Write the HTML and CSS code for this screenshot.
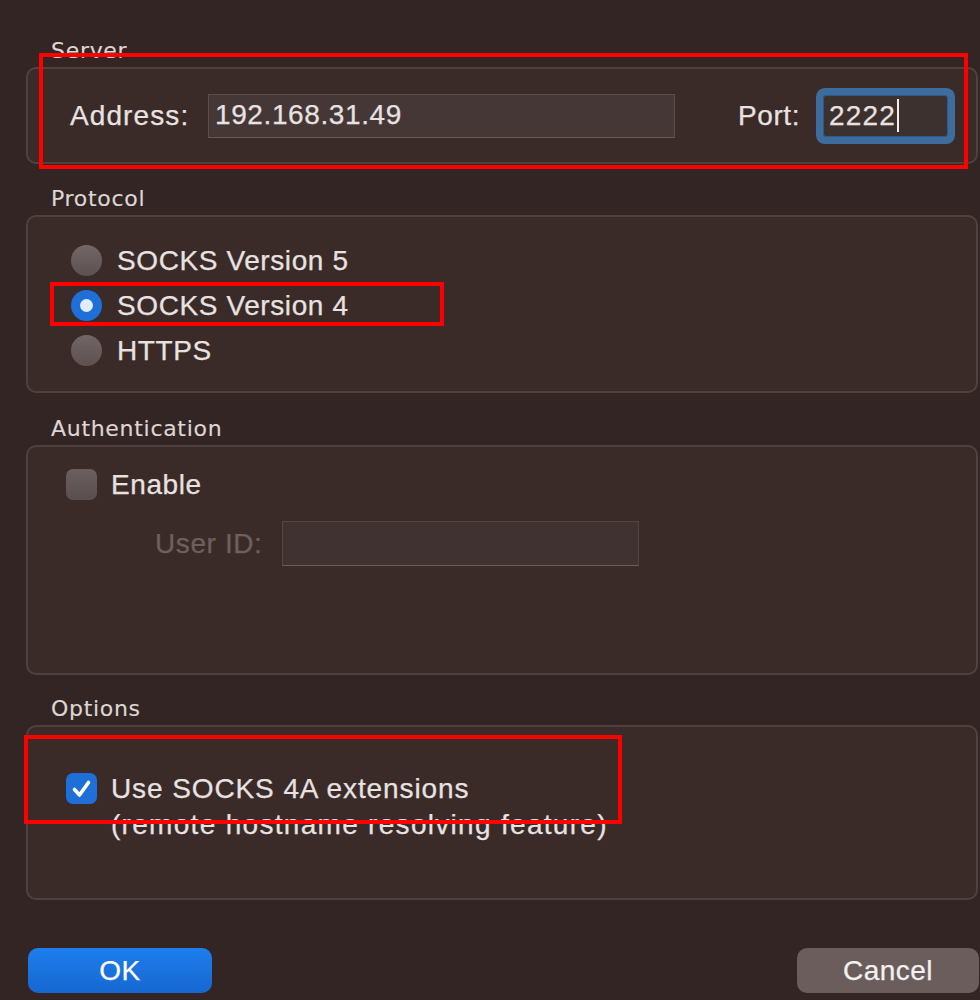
FILE: index.html
```html
<!DOCTYPE html>
<html lang="en">
<head>
<meta charset="utf-8">
<title>SOCKS Proxy</title>
<link rel="stylesheet" href="styles.css">
</head>
<body>
<div class="dialog">
  <section class="group">
    <div class="group-title">Server</div>
    <div class="group-box server-box">
      <span class="field-label addr-label">Address:</span>
      <div class="text-field address-field">192.168.31.49</div>
      <span class="field-label port-label">Port:</span>
      <div class="text-field port-field">2222<span class="caret"></span></div>
    </div>
  </section>

  <section class="group">
    <div class="group-title">Protocol</div>
    <div class="group-box protocol-box">
      <div class="radio-row"><span class="radio"></span><span class="opt-text">SOCKS Version 5</span></div>
      <div class="radio-row"><span class="radio checked"></span><span class="opt-text">SOCKS Version 4</span></div>
      <div class="radio-row"><span class="radio"></span><span class="opt-text">HTTPS</span></div>
    </div>
  </section>

  <section class="group auth-group">
    <div class="group-title">Authentication</div>
    <div class="group-box auth-box">
      <div class="check-row"><span class="checkbox"></span><span class="opt-text">Enable</span></div>
      <div class="userid-row">
        <span class="field-label disabled-label">User ID:</span>
        <div class="text-field userid-field"></div>
      </div>
    </div>
  </section>

  <section class="group options-group">
    <div class="group-title">Options</div>
    <div class="group-box options-box">
      <div class="opt-row">
        <span class="checkbox checked">
          <svg viewBox="0 0 31 31" width="31" height="31"><path d="M8.5 16.5 L13.5 22 L22.5 9.5" fill="none" stroke="#ffffff" stroke-width="3.6" stroke-linecap="round" stroke-linejoin="round"/></svg>
        </span>
        <div class="opt-text multi">
          <span class="line line-main">Use SOCKS 4A extensions</span>
          <span class="line line-sub">(remote hostname resolving feature)</span>
        </div>
      </div>
    </div>
  </section>

  <div class="buttons">
    <button class="btn btn-ok">OK</button>
    <button class="btn btn-cancel">Cancel</button>
  </div>
</div>

<div class="annotation ann-server"></div>
<div class="annotation ann-socks4"></div>
<div class="annotation ann-options"></div>
</body>
</html>
```

FILE: styles.css
```css
* { box-sizing: border-box; }

html, body {
  margin: 0;
  padding: 0;
}

body {
  width: 980px;
  height: 1000px;
  overflow: hidden;
  position: relative;
  background: #332523;
  color: #e8e2e1;
  font-family: "Liberation Sans", Arial, sans-serif;
  font-size: 28px;
  letter-spacing: 0.6px;
  -webkit-text-stroke: 0.25px currentColor;
}

.dialog {
  display: flex;
  flex-direction: column;
  padding: 38px 2px 0 26px;
}

.group + .group { margin-top: 22px; }
.group.auth-group { margin-top: 23px; }
.group.options-group { margin-top: 21px; }

.group-title {
  font-family: "DejaVu Sans", sans-serif;
  font-size: 22px;
  line-height: 26px;
  letter-spacing: 0.7px;
  color: #ddd6d5;
  -webkit-text-stroke: 0.15px currentColor;
  margin: 0 0 3px 25px;
}

.group-box {
  background: #3a2b29;
  border: 2px solid #4e4240;
  border-radius: 10px;
}

/* Server */
.server-box {
  height: 97px;
  display: flex;
  align-items: center;
  padding-left: 42px;
}

.field-label {
  flex-shrink: 0;
  line-height: 32px;
}

.addr-label {
  width: 138px;
  letter-spacing: 1.1px;
}

.text-field {
  flex-shrink: 0;
  background: #443736;
  border: 1px solid #5a4e4d;
  border-bottom-color: #655958;
  line-height: 40px;
}

.address-field {
  width: 467px;
  height: 44px;
  padding-left: 6px;
}

.port-label {
  margin-left: 63px;
  width: 85px;
}

.port-field {
  width: 125px;
  height: 42px;
  padding-left: 5px;
  background: #3d3130;
  border: 1px solid #30598a;
  border-radius: 3px;
  box-shadow: 0 0 0 7px #3e6c9c;
  display: flex;
  align-items: center;
  letter-spacing: 1.2px;
}

.caret {
  display: inline-block;
  width: 2px;
  height: 33px;
  margin-left: 1px;
  background: #f2eeee;
}

/* Protocol */
.protocol-box {
  height: 178px;
  padding: 21px 0 0 43px;
}

.radio-row {
  height: 45px;
  display: flex;
  align-items: center;
  gap: 15px;
}

.radio {
  width: 31px;
  height: 31px;
  border-radius: 50%;
  flex-shrink: 0;
  background: linear-gradient(#726766, #5c5150);
}

.radio.checked {
  background: #1f6fd8;
  display: flex;
  align-items: center;
  justify-content: center;
}

.radio.checked::after {
  content: "";
  width: 13px;
  height: 13px;
  border-radius: 50%;
  background: #e2edfc;
}

.opt-text { line-height: 32px; }

/* Authentication */
.auth-box {
  height: 230px;
  padding: 22px 0 0 38px;
}

.check-row {
  height: 31px;
  display: flex;
  align-items: center;
  gap: 14px;
}

.checkbox {
  width: 31px;
  height: 31px;
  border-radius: 7px;
  flex-shrink: 0;
  background: linear-gradient(#6a5f5e, #5a4f4e);
}

.checkbox.checked {
  background: #1f6fd8;
  display: flex;
}

.userid-row {
  margin-top: 21px;
  height: 45px;
  display: flex;
  align-items: center;
  padding-left: 89px;
}

.disabled-label {
  width: 127px;
  color: #6c605f;
}

.userid-field {
  width: 357px;
  height: 45px;
  background: #3f3231;
  border-color: #524645;
  border-bottom-color: #6a5e5d;
}

/* Options */
.options-box {
  height: 175px;
  padding: 44px 0 0 38px;
}

.opt-row {
  display: flex;
  align-items: flex-start;
  gap: 14px;
}

.opt-row .checkbox { margin-top: 2px; }

.opt-text.multi {
  line-height: 36px;
  display: flex;
  flex-direction: column;
}

.line-main { letter-spacing: 0.9px; }
.line-sub { letter-spacing: 1.3px; }

/* Buttons */
.buttons {
  display: flex;
  justify-content: space-between;
  margin: 48px -1px 0 2px;
}

.btn {
  height: 45px;
  border: none;
  border-radius: 10px;
  font-family: "Liberation Sans", Arial, sans-serif;
  font-size: 28px;
  letter-spacing: 0.5px;
  color: #f4f1f1;
  -webkit-text-stroke: 0.25px currentColor;
  padding: 0;
}

.btn-ok {
  width: 184px;
  background: linear-gradient(#1d7eee, #1767d0);
  color: #ffffff;
}

.btn-cancel {
  width: 182px;
  background: #6a5d5b;
}

/* Red annotation boxes drawn over the dialog */
.annotation {
  position: absolute;
  border: 4px solid #ff0000;
  pointer-events: none;
}

.ann-server { left: 39px; top: 53px; width: 929px; height: 116px; }
.ann-socks4 { left: 50px; top: 282px; width: 394px; height: 44px; }
.ann-options { left: 24px; top: 735px; width: 598px; height: 89px; }
```
